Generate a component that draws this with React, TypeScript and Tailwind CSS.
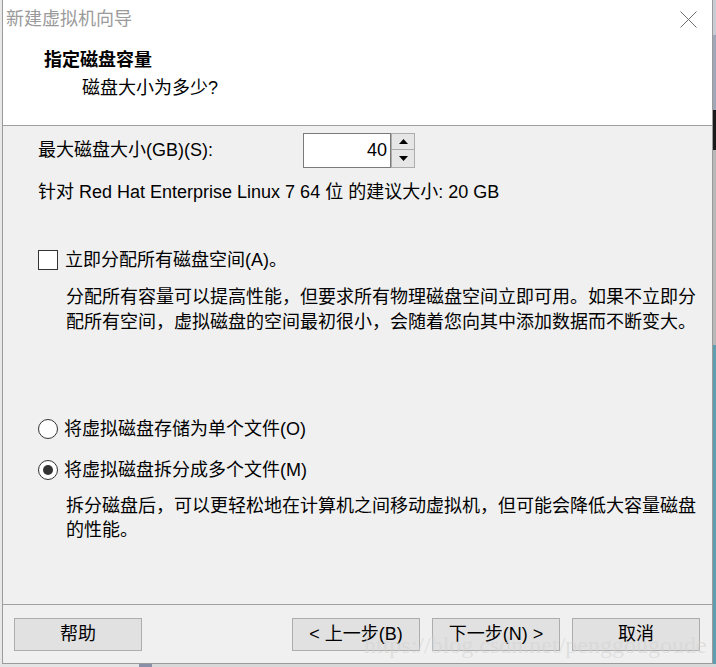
import { ReactNode } from "react";

const FONT = { fontFamily: '"Liberation Sans", "Noto Sans CJK SC", sans-serif' };

function Btn({ children }: { children: ReactNode }) {
  return (
    <div className="w-[128px] h-[33px] flex items-center justify-center bg-[#e1e1e1] border border-[#adadad] text-[18px] text-black">
      {children}
    </div>
  );
}

function Radio({ checked }: { checked?: boolean }) {
  return (
    <div className="w-[20px] h-[20px] rounded-full border border-[#333] bg-white flex items-center justify-center shrink-0">
      {checked && <div className="w-[10px] h-[10px] rounded-full bg-[#333]" />}
    </div>
  );
}

export default function App() {
  return (
    <div className="w-[716px] h-[667px] relative overflow-hidden bg-[#e4e4e4]" style={FONT}>
      <div className="flex h-[664px]">
        {/* window behind, left edge */}
        <div className="w-[2px] bg-[#e8e8e8]" />

        {/* dialog */}
        <div className="w-[711px] flex flex-col border-x border-b border-[#9b9b9b] bg-[#f0f0f0]">
          <div className="bg-white">
            <div className="h-[38px] flex items-center justify-between pl-[3px] pr-[15px]">
              <span className="text-[18px] text-[#9a9a9a]">新建虚拟机向导</span>
              <svg width="17" height="17" viewBox="0 0 17 17" className="text-[#6e6e6e]">
                <path d="M0.5 0.5 L16.5 16.5 M16.5 0.5 L0.5 16.5" stroke="currentColor" strokeWidth="1" />
              </svg>
            </div>
            <div className="h-[88px] pt-[10px] pl-[41px] border-b border-[#a0a0a0]">
              <div className="text-[18px] leading-[24px] font-bold text-black">指定磁盘容量</div>
              <div className="text-[18px] leading-[24px] mt-[4px] ml-[38px] text-black">磁盘大小为多少?</div>
            </div>
          </div>

          <div className="h-[478px] pl-[35px] text-[18px] text-black">
            <div className="flex items-center h-[35px] mt-[7px]">
              <span className="w-[265px]">最大磁盘大小(GB)(S):</span>
              <div className="flex h-[35px]">
                <div className="w-[88px] h-[35px] bg-white border border-[#7a7a7a] flex items-center justify-end pr-[3px]">
                  40
                </div>
                <div className="w-[24px] flex flex-col">
                  <div className="h-[17px] bg-[#e6e6e6] border border-[#adadad] flex items-center justify-center">
                    <svg width="9" height="5" viewBox="0 0 9 5"><path d="M0 5 L4.5 0 L9 5 Z" fill="#000" /></svg>
                  </div>
                  <div className="h-[18px] bg-[#e6e6e6] border border-t-0 border-[#adadad] flex items-center justify-center">
                    <svg width="9" height="5" viewBox="0 0 9 5"><path d="M0 0 L4.5 5 L9 0 Z" fill="#000" /></svg>
                  </div>
                </div>
              </div>
            </div>

            <div className="leading-[24px] mt-[12px]">针对 Red Hat Enterprise Linux 7 64 位 的建议大小: 20 GB</div>

            <div className="flex items-center gap-[7px] h-[24px] mt-[44px]">
              <div className="w-[20px] h-[20px] bg-white border border-[#333] shrink-0" />
              <span>立即分配所有磁盘空间(A)。</span>
            </div>
            <div className="ml-[28px] mt-[13px] leading-[25px] w-[640px]">
              分配所有容量可以提高性能，但要求所有物理磁盘空间立即可用。如果不立即分
              <br />
              配所有空间，虚拟磁盘的空间最初很小，会随着您向其中添加数据而不断变大。
            </div>

            <div className="flex items-center gap-[6px] h-[24px] mt-[82px]">
              <Radio />
              <span>将虚拟磁盘存储为单个文件(O)</span>
            </div>
            <div className="flex items-center gap-[6px] h-[24px] mt-[17px]">
              <Radio checked />
              <span>将虚拟磁盘拆分成多个文件(M)</span>
            </div>
            <div className="ml-[28px] mt-[12px] leading-[24px] w-[640px]">
              拆分磁盘后，可以更轻松地在计算机之间移动虚拟机，但可能会降低大容量磁盘
              <br />
              的性能。
            </div>
          </div>

          <div className="flex-1 border-t border-[#a0a0a0] pt-[13px] pl-[11px] pr-[12px] flex items-start">
            <Btn>帮助</Btn>
            <div className="flex-1" />
            <div className="flex gap-[12px]">
              <Btn>&lt; 上一步(B)</Btn>
              <Btn>下一步(N) &gt;</Btn>
              <Btn>取消</Btn>
            </div>
          </div>
        </div>

        {/* desktop behind, right edge */}
        <div className="w-[3px] flex flex-col">
          <div className="h-[35px] bg-[#c8ccd4]" />
          <div className="h-[75px] bg-[#a0a8b8]" />
          <div className="h-[40px] bg-[#1a1a1a]" />
          <div className="h-[195px] bg-[#b8b8b8]" />
          <div className="flex-1 bg-[#5f9eae]" />
        </div>
      </div>

      <div className="flex h-[3px]">
        <div className="w-[139px] bg-[#e4e4e4]" />
        <div className="w-[13px] bg-[#8a90a8]" />
        <div className="flex-1 bg-[#d8d8d8]" />
      </div>

      {/* watermark */}
      <div
        className="absolute left-[364px] top-[627px] text-[24px] text-[#d4d4d4]/60 pointer-events-none"
        style={{ fontFamily: '"Liberation Serif", serif' }}
      >
        https://blog.csdn.net/penggougoude
      </div>
    </div>
  );
}
